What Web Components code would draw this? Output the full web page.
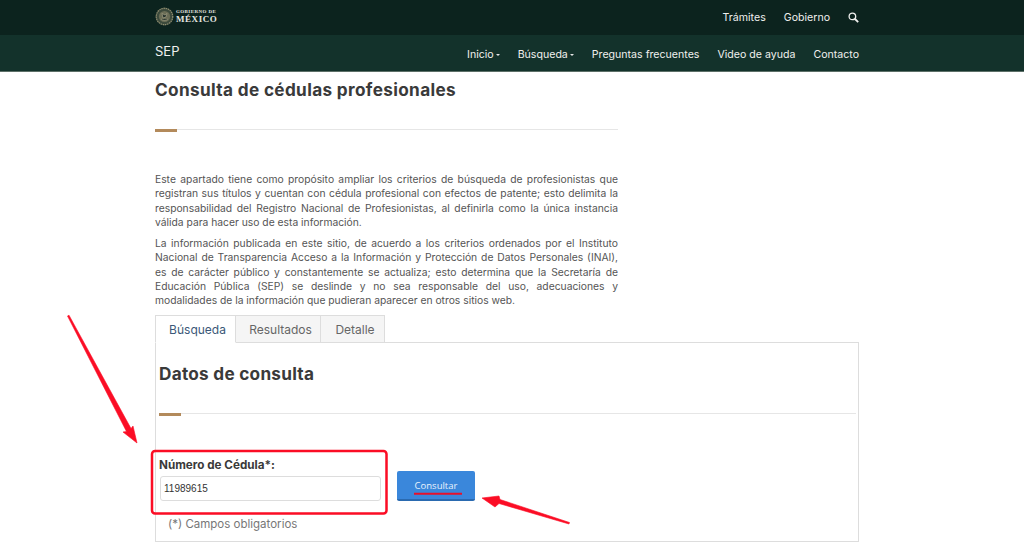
<!DOCTYPE html>
<html lang="es"><head><meta charset="utf-8"><title>Consulta de cédulas profesionales</title>
<style>
html,body{margin:0;padding:0;background:#fff;height:559px;overflow:hidden}
body{font-family:Inter,"Open Sans",sans-serif;position:relative}
</style></head><body>
<gob-header></gob-header>
<main-page></main-page>
<note-marks></note-marks>
<script>
const F='Inter,"Open Sans",sans-serif';
function def(name,html){customElements.define(name,class extends HTMLElement{constructor(){super();this.attachShadow({mode:'open'}).innerHTML=html;}})}
def('gob-logo',`<style>:host{display:flex;align-items:center;gap:2px;color:#e6e6e0}
.t{display:flex;flex-direction:column;font-family:"Liberation Serif",serif;font-weight:700;line-height:1}
.a{font-size:5px;letter-spacing:.42px;margin-bottom:1px}.b{font-size:9px;letter-spacing:.55px}</style>
<svg width="19" height="19" viewBox="0 0 19 19"><circle cx="9.5" cy="9.5" r="9" fill="#3c4a3c"/><circle cx="9.5" cy="9.5" r="8.2" fill="none" stroke="#8f8d70" stroke-width="1.2" stroke-dasharray="1.4 .8"/><circle cx="9.5" cy="9.5" r="5.6" fill="#6a6d56"/><path d="M6 12c2 1.8 5 1.8 7 0M7 6.5l3 1.500 2-1.500-1 3.500-3 1z" fill="#23302a" stroke="#b0ad90" stroke-width=".6"/></svg>
<div class="t"><span class="a">GOBIERNO DE</span><span class="b">MÉXICO</span></div>`);
def('gob-header',`<style>:host{display:block;font:400 10.6px ${F};color:#f0f0ee}
.top{height:35px;background:#0c231e}.sub{height:36px;background:#13322b;border-bottom:1px solid #5d7068}
.in{width:704px;margin-left:155px;height:100%;display:flex;align-items:center;justify-content:space-between}
nav{display:flex;align-items:center}
.top nav{gap:18px}.sub nav{gap:18px;padding-top:2px}
gob-logo{margin-top:-3px}
.sep{font-size:13px;margin-top:-5px}
.c{display:inline-block;width:0;height:0;border:2.5px solid transparent;border-top-color:#e6e6e6;border-bottom:0;margin-left:2px;vertical-align:middle}
svg{display:block}</style>
<div class="top"><div class="in"><gob-logo></gob-logo><nav><span>Trámites</span><span>Gobierno</span><svg width="11" height="11" viewBox="0 0 11 11" fill="none" stroke="#f0f0ee"><circle cx="4.400" cy="4.400" r="3.300" stroke-width="1.300"/><path d="M7 7l3.200 3.200" stroke-width="1.800"/></svg></nav></div></div>
<div class="sub"><div class="in"><span class="sep">SEP</span><nav><span>Inicio<i class="c"></i></span><span>Búsqueda<i class="c"></i></span><span>Preguntas frecuentes</span><span>Video de ayuda</span><span>Contacto</span></nav></div></div>`);
def('title-rule',`<style>:host{display:block;height:3px;position:relative}
.l{height:1px;background:#e6e6e6}.b{width:22px;height:3px;background:#b38a5b;margin-top:-1px}</style><div class="l"></div><div class="b"></div>`);
def('j-line',`<style>:host{display:block;text-align:justify;text-align-last:justify;white-space:nowrap}:host([last]){text-align-last:left}</style><slot></slot>`);
def('tab-bar',`<style>:host{display:flex;height:28px;font:400 12px ${F};color:#666}
div{box-sizing:border-box;border:1px solid #ddd;border-bottom:1px solid #ddd;border-left:0;background:#f5f5f5;display:flex;align-items:center;justify-content:center;padding:1px 0 0 5px}
.a{width:81px;background:#fff;color:#3b5878;border-left:1px solid #ddd;border-bottom-color:#fff;padding-left:4px}.r{width:85px}.d{width:64px}</style>
<div class="a">Búsqueda</div><div class="r">Resultados</div><div class="d">Detalle</div>`);
def('query-form',`<style>:host{display:flex;align-items:flex-start;font-family:${F}}
label{display:block;font:700 11.7px/14px ${F};color:#3a3a3a;margin-bottom:4px}
.i{box-sizing:border-box;width:221px;height:25px;margin-left:1px;border:1px solid #ddd;border-radius:3px;background:#fff;font:400 10px/23px "Liberation Sans",sans-serif;color:#333;padding-left:3px}
button{box-sizing:border-box;width:78px;height:30px;margin:13px 0 0 16px;border:0;border-bottom:2px solid #2a6ab0;border-radius:2px;background:#3a87db;color:#e8f2fc;font:400 9.5px "Open Sans",sans-serif;padding:0}</style>
<div><label>Número de Cédula*:</label><div class="i">11989615</div></div><button>Consultar</button>`);
def('main-page',`<style>:host{display:block;width:704px;margin-left:155px;font:400 10.3px/14.3px ${F};color:#555}
h1{font:700 17.2px/22px ${F};color:#3a3a3a;margin:0;padding-top:7px;height:50px;letter-spacing:.02em}
.col{width:463px}
.p1{margin-top:40px}.p2{margin-top:7px}
.panel{box-sizing:border-box;height:200px;border:1px solid #ddd;padding:0 2px 0 3px}
h2{font:700 17.2px/20px ${F};color:#3a3a3a;margin:0;padding-top:21px;height:49px;letter-spacing:.015em}
tab-bar{margin-top:7.5px;margin-bottom:-1px;position:relative}
query-form{margin-top:42px}
.req{font:400 11.5px/14px ${F};color:#777;margin:16px 0 0 9px}</style>
<h1>Consulta de cédulas profesionales</h1>
<div class="col"><title-rule></title-rule>
<div class="p1"><j-line>Este apartado tiene como propósito ampliar los criterios de búsqueda de profesionistas que</j-line><j-line>registran sus títulos y cuentan con cédula profesional con efectos de patente; esto delimita la</j-line><j-line>responsabilidad del Registro Nacional de Profesionistas, al definirla como la única instancia</j-line><j-line last>válida para hacer uso de esta información.</j-line></div>
<div class="p2"><j-line>La información publicada en este sitio, de acuerdo a los criterios ordenados por el Instituto</j-line><j-line>Nacional de Transparencia  Acceso a la Información y Protección de Datos Personales (INAI),</j-line><j-line>es de carácter público y constantemente se actualiza; esto determina que la Secretaría de</j-line><j-line>Educación Pública (SEP) se deslinde y no sea responsable del uso, adecuaciones y</j-line><j-line last>modalidades de la información que pudieran aparecer en otros sitios web.</j-line></div></div>
<tab-bar></tab-bar>
<div class="panel"><h2>Datos de consulta</h2><title-rule></title-rule><query-form></query-form><div class="req">(*) Campos obligatorios</div></div>`);
def('note-marks',`<style>:host{position:absolute;left:0;top:0;width:1024px;height:559px;pointer-events:none}svg{display:block}</style>
<svg width="1024" height="559" viewBox="0 0 1024 559">
<path d="M67.500 316L69 315.200 131 428.500 133 426 137 443 123 432 126.500 431.500Z" fill="#fb0d25" stroke="#fb0d25" stroke-width=".6"/>
<path d="M569.500 522.500L569 524 499 503.500 495 507 482 498 499 496 500 499.500Z" fill="#fb0d25" stroke="#fb0d25" stroke-width=".6"/>
<rect x="152" y="451" width="234.500" height="62.500" rx="3" fill="none" stroke="#fb0d25" stroke-width="2.500"/>
<path d="M414 493.700H462" stroke="#e8102a" stroke-width="2"/></svg>`);
</script></body></html>
